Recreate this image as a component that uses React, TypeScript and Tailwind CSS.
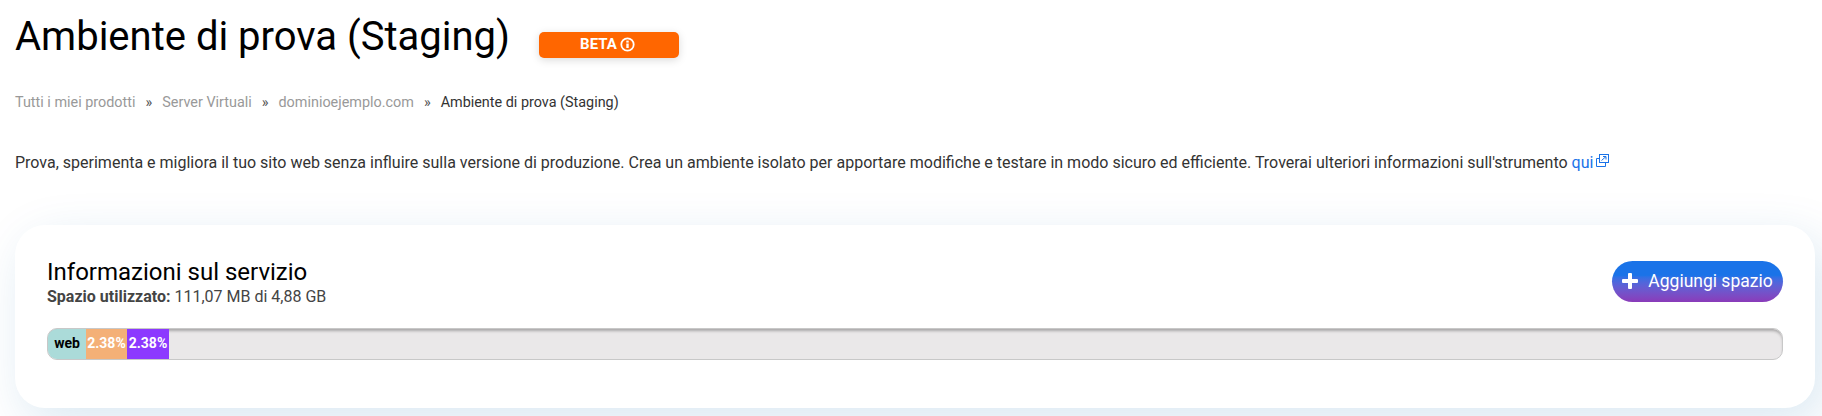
import React from 'react';

const roboto = "font-['Roboto','Liberation_Sans',sans-serif]";

const Crumb: React.FC<{ label: string; last?: boolean }> = ({ label, last }) => (
  <>
    <span className={last ? 'text-[#333333]' : 'text-[#999999]'}>{label}</span>
    {!last && <span className="mx-[10px] text-[#555555]">»</span>}
  </>
);

const App: React.FC = () => {
  return (
    <div className={`${roboto} w-[1822px] h-[416px] overflow-hidden bg-white pl-[15px] pr-[7px] text-[#333333]`}>
      <div className="flex items-center pt-[12px] h-[62px]">
        <h1 className="text-[40px] leading-[50px] text-black">Ambiente di prova (Staging)</h1>
        <div className="ml-[29px] mt-[15px] flex h-[26px] w-[140px] items-center justify-center gap-[3px] rounded-[5px] bg-[#ff6600] pr-[3px] text-[15px] font-bold text-white shadow-[0_2px_8px_rgba(0,0,0,0.15)]">
          BETA
          <svg width="15" height="15" viewBox="0 0 15 15" fill="none">
            <circle cx="7.5" cy="7.5" r="6.2" stroke="white" strokeWidth="1.8" />
            <rect x="6.3" y="6.5" width="2.4" height="4.5" fill="white" />
            <rect x="6.3" y="3.6" width="2.4" height="2" fill="white" />
          </svg>
        </div>
      </div>

      <div className="mt-[32px] text-[14.4px] leading-[18px]">
        <Crumb label="Tutti i miei prodotti" />
        <Crumb label="Server Virtuali" />
        <Crumb label="dominioejemplo.com" />
        <Crumb label="Ambiente di prova (Staging)" last />
      </div>

      <p className="mt-[41px] text-[16px] leading-[20px] text-[#333333]">
        Prova, sperimenta e migliora il tuo sito web senza influire sulla versione di produzione. Crea un ambiente isolato per apportare modifiche e testare in modo sicuro ed efficiente. Troverai ulteriori informazioni sull'strumento{' '}
        <a className="text-[#1a73e8]">qui</a>
        <svg className="ml-[3px] inline-block align-[1px]" width="13" height="13" viewBox="0 0 13 13" fill="none" stroke="#1a73e8" strokeWidth="1">
          <rect x="3.5" y="0.5" width="9" height="8" />
          <path d="M3.5 4.5H0.5V12.5H9.5V8.5" />
          <path d="M5.5 6.5L10 2.5M7 2.5H10V5.5" />
        </svg>
      </p>

      <div className="mt-[52px] h-[183px] rounded-[30px] bg-white px-[32px] pt-[33px] shadow-[10px_15px_50px_rgba(0,100,170,0.15)]">
        <div className="flex items-start justify-between">
          <div>
            <h2 className="text-[24px] leading-[28px] text-black">Informazioni sul servizio</h2>
            <div className="pt-[1px] text-[16px] leading-[19px] text-[#444444]">
              <b>Spazio utilizzato:</b> 111,07 MB di 4,88 GB
            </div>
          </div>
          <button className="mt-[3px] flex h-[41px] w-[171px] items-center justify-center gap-[10px] rounded-full bg-gradient-to-b from-[#1a73e8] from-35% to-[#8a3ab9] text-[17.5px] text-white">
            <svg className="-mt-[1px]" width="16" height="16" viewBox="0 0 16 16" fill="white">
              <rect x="6" y="0" width="4" height="16" rx="1" />
              <rect x="0" y="6" width="16" height="4" rx="1" />
            </svg>
            Aggiungi spazio
          </button>
        </div>
        <div className="mt-[22px] flex h-[32px] overflow-hidden rounded-[10px] border border-[#c8c8c8] bg-[#eae8e9] text-[14px] font-bold leading-[28px] shadow-[inset_0_3px_3px_-1px_rgba(0,0,0,0.28)]">
          <div className="w-[38px] bg-[#abdbd9] text-center text-black">web</div>
          <div className="w-[41px] bg-[#f4b077] text-center text-white">2.38%</div>
          <div className="w-[42px] bg-[#8c39ff] text-center text-white">2.38%</div>
        </div>
      </div>
    </div>
  );
};

export default App;
